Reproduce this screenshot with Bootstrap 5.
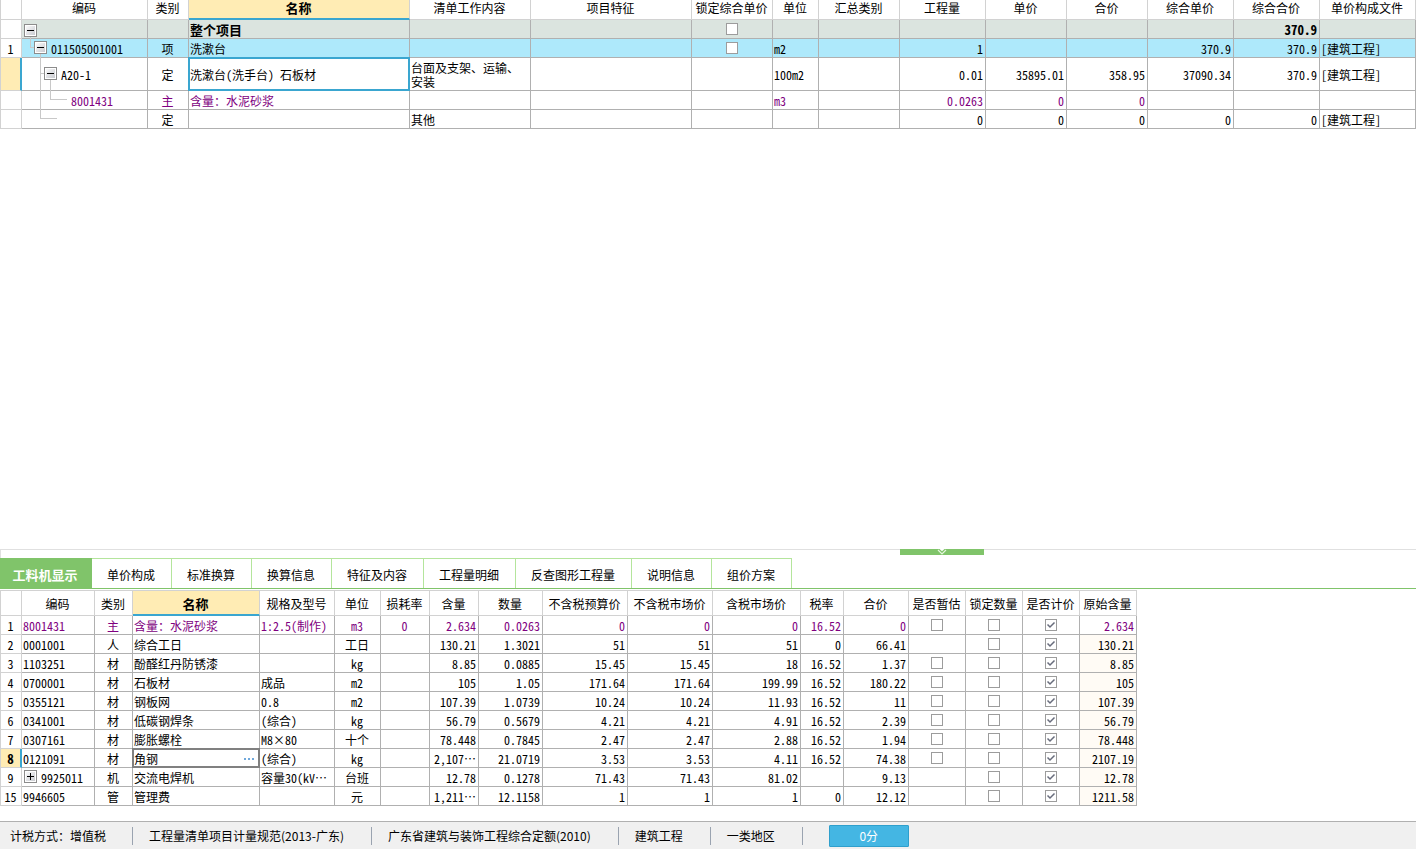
<!DOCTYPE html>
<html lang="zh-CN">
<head>
<meta charset="utf-8">
<meta name="viewport" content="width=device-width, initial-scale=1">
<title>工程量清单计价</title>
<link href="https://cdn.jsdelivr.net/npm/bootstrap@5.3.0/dist/css/bootstrap.min.css" rel="stylesheet">
<style>
  :root { --line: #b0b0b0; --line-soft: #d2d2d2; --accent: #3aa6d0; --pick: #ffecb4; --leaf: #80c46a; --leaf-soft: #b4e59c; }
  body { font-family: "Noto Sans CJK SC", sans-serif; font-size: 12px; line-height: 18px; color: #000; background: #fff; }
  .half { font-feature-settings: "hwid" 1; }

  /* grids */
  .sheet { table-layout: fixed; border-collapse: separate; border-spacing: 0; }
  .sheet th, .sheet td { padding: 2px 2px 0 1px; height: 19px; line-height: 16px; border: 0 solid var(--line); border-width: 0 1px 1px 0; position: relative; white-space: nowrap; vertical-align: middle; }
  .sheet thead th { border-color: var(--line-soft); font-weight: 400; text-align: center; padding: 0 1px 0 0; }
  .sheet thead .picked { background: var(--pick); font-weight: 700; font-size: 13px; border-bottom: 2px solid var(--accent); }
  .sheet tr > :first-child { border-left: 1px solid var(--line-soft); border-right-color: var(--line-soft); border-bottom-color: var(--line-soft); text-align: center; font-weight: 400; padding: 2px 1px 0 0; }
  .sheet tbody .marked > :first-child { background: var(--pick); border-right: 2px solid var(--accent); font-weight: 700; font-size: 13px; padding-right: 0; }
  .sheet .n { text-align: right; }
  .sheet .c { text-align: center; }
  .sheet .main-res > td { color: #800080; }
  .sheet .total > td { background: #dbe4df; font-weight: 700; font-size: 13px; }
  .sheet .current > td { background: #aee9fb; }
  .focus-cell::after { content: ""; position: absolute; inset: -1px; border: 2px solid var(--accent); pointer-events: none; }
  .focus-cell.gray::after { border-color: #808080; }

  .bill { width: 100%; }
  .bill thead th { height: 20px; line-height: 15px; padding-bottom: 4px; }
  .bill thead .picked { padding-bottom: 3px; }
  .bill .tall > * { height: 33px; line-height: 14px; }
  .bill .wraps { white-space: normal; }
  .w22 { width: 22px } .w38 { width: 38px } .w41 { width: 41px } .w43 { width: 43px } .w46 { width: 46px } .w49 { width: 49px }
  .w57 { width: 57px } .w64 { width: 64px } .w65 { width: 65px } .w73 { width: 73px } .w75 { width: 75px } .w81 { width: 81px }
  .w85 { width: 85px } .w86 { width: 86px } .w88 { width: 88px } .w96 { width: 96px } .w121 { width: 121px } .w126 { width: 126px }
  .w127 { width: 127px } .w161 { width: 161px }

  .detail { width: 1137px; }
  .detail thead th { height: 26px; border-top-width: 1px; padding-top: 2px; }
  .detail .orig { background: #fffbf5; }

  /* tree column */
  .sheet .tree { padding-right: 0; }
  .tree > div { line-height: 16px; }
  .lv0 { padding-left: 1px; } .lv1 { padding-left: 11px; } .lv2 { padding-left: 21px; } .lv3 { padding-left: 48px; }
  .branch { position: absolute; left: 0; top: 0; z-index: 1; overflow: visible; pointer-events: none; }
  .branch path { fill: none; stroke: #c8c8c8; shape-rendering: crispEdges; }
  .knob { width: 13px; height: 13px; padding: 0; border: 1px solid #8c8c8c; background: linear-gradient(135deg, #fff, #c4c6cc); box-shadow: inset 0 0 0 1px #fff; position: relative; z-index: 2; }
  .knob svg { display: block; }

  .sheet td.pick { padding: 0 1px 0 0; }
  .tick { appearance: none; display: block; width: 12px; height: 12px; margin: 0 auto; border: 1px solid #9c9c9c; background: #fff center / 10px 10px no-repeat; }
  .tick:checked { background-image: url("data:image/svg+xml,%3Csvg xmlns='http://www.w3.org/2000/svg' viewBox='0 0 10 10'%3E%3Cpath d='M1.5 4.5 4 7 8.5 2.5' fill='none' stroke='%23686c7c' stroke-width='1.5'/%3E%3C/svg%3E"); }
  .more { border: 0; padding: 0; background: none; width: 11px; height: 16px; margin-right: 2px; }
  .more svg { display: block; }

  /* lower panel */
  .splitter { height: 9px; border-top: 1px solid #e0e0e0; border-left: 1px solid #e0e0e0; padding-right: 30.5%; }
  .handle { width: 84px; height: 6px; margin-top: -1px; padding: 0; border: 0; background: var(--leaf); }
  .handle svg { display: block; margin: 0 auto; }
  .panel-tabs { border-bottom: 1px solid var(--leaf); margin-bottom: 1px; }
  .panel-tabs .nav-link { height: 30px; padding: 3px 16px 1px 15px; border: 0 solid var(--leaf-soft); border-width: 1px 1px 0 0; border-radius: 0; margin: 0; background: #fff; color: #000; }
  .panel-tabs .nav-link.active { width: 92px; padding: 3px 1px 1px 0; background: var(--leaf); border-color: var(--leaf); color: #fff; font-weight: 700; font-size: 13px; }

  .statusbar { height: 28px; margin-top: 15px; background: #f0f0f0; border-top: 1px solid var(--line); }
  .statusbar .seg { padding: 0 27px 0 16px; border-right: 1px solid #9aa3b0; white-space: nowrap; }
  .statusbar .seg:first-child { padding: 0 26px 0 10px; }
  .score { width: 80px; height: 22px; margin-left: 26px; padding: 0; border: 1px solid #2f9fcc; border-radius: 1px; background: #44b6e3; color: #fff; font-size: 12px; line-height: 20px; }
  .score:hover { background: #3aa6d0; color: #fff; }
</style>
</head>
<body>
<div class="d-flex flex-column min-vh-100">
<main class="flex-grow-1">
<table class="sheet bill half">
<colgroup><col class="w22"><col class="w126"><col class="w41"><col><col class="w121"><col class="w161"><col class="w81"><col class="w46"><col class="w81"><col class="w86"><col class="w81"><col class="w81"><col class="w86"><col class="w86"><col class="w96"></colgroup>
<thead><tr><th></th><th>编码</th><th>类别</th><th class="picked">名称</th><th>清单工作内容</th><th>项目特征</th><th>锁定综合单价</th><th>单位</th><th>汇总类别</th><th>工程量</th><th>单价</th><th>合价</th><th>综合单价</th><th>综合合价</th><th>单价构成文件</th></tr></thead>
<tbody>
<tr class="total"><th></th>
<td class="tree"><svg class="branch" width="1" height="1" aria-hidden="true"><path d="M8.500 15V27.500H12"/></svg><div class="lv0 d-flex align-items-start"><button class="knob" type="button" aria-label="折叠"><svg width="11" height="11"><path d="M2 5.500H9" stroke="#000"/></svg></button></div></td>
<td></td><td>整个项目</td><td></td><td></td><td class="pick"><input class="tick" type="checkbox" aria-label="锁定综合单价"></td><td></td><td></td><td></td><td></td><td></td><td></td><td class="n">370.9</td><td></td></tr>
<tr class="current"><th>1</th>
<td class="tree"><svg class="branch" width="1" height="1" aria-hidden="true"><path d="M18.500 15V79.500H35M18.500 34.500H22"/></svg><div class="lv1 d-flex align-items-start"><button class="knob me-1" type="button" aria-label="折叠"><svg width="11" height="11"><path d="M2 5.500H9" stroke="#000"/></svg></button>011505001001</div></td>
<td class="c">项</td><td>洗漱台</td><td></td><td></td><td class="pick"><input class="tick" type="checkbox" aria-label="锁定综合单价"></td><td>m2</td><td></td><td class="n">1</td><td></td><td></td><td class="n">370.9</td><td class="n">370.9</td><td>[建筑工程]</td></tr>
<tr class="tall marked"><th></th>
<td class="tree"><svg class="branch" width="1" height="1" aria-hidden="true"><path d="M28.500 22V41.500H45"/></svg><div class="lv2 d-flex align-items-start"><button class="knob me-1" type="button" aria-label="折叠"><svg width="11" height="11"><path d="M2 5.500H9" stroke="#000"/></svg></button>A20-1</div></td>
<td class="c">定</td><td class="focus-cell">洗漱台(洗手台) 石板材</td><td class="wraps">台面及支架、运输、安装</td><td></td><td></td><td>100m2</td><td></td><td class="n">0.01</td><td class="n">35895.01</td><td class="n">358.95</td><td class="n">37090.34</td><td class="n">370.9</td><td>[建筑工程]</td></tr>
<tr class="main-res"><th></th><td class="tree"><div class="lv3">8001431</div></td><td class="c">主</td><td>含量：水泥砂浆</td><td></td><td></td><td></td><td>m3</td><td></td><td class="n">0.0263</td><td class="n">0</td><td class="n">0</td><td></td><td></td><td></td></tr>
<tr><th></th><td></td><td class="c">定</td><td></td><td>其他</td><td></td><td></td><td></td><td></td><td class="n">0</td><td class="n">0</td><td class="n">0</td><td class="n">0</td><td class="n">0</td><td>[建筑工程]</td></tr>
</tbody>
</table>
</main>

<section>
<div class="splitter d-flex justify-content-end align-items-start">
<button class="handle" type="button" aria-label="收起面板"><svg width="10" height="6" viewBox="0 0 10 6"><path d="M2.500 0H7.500L5 2.200Z" fill="#fff"/><path d="M1 1 5 5 9 1" fill="none" stroke="#e4f5dd" stroke-width="1.200"/></svg></button>
</div>
<ul class="nav panel-tabs" role="tablist">
<li class="nav-item"><button class="nav-link active" type="button" role="tab" aria-selected="true">工料机显示</button></li>
<li class="nav-item"><button class="nav-link" type="button" role="tab">单价构成</button></li>
<li class="nav-item"><button class="nav-link" type="button" role="tab">标准换算</button></li>
<li class="nav-item"><button class="nav-link" type="button" role="tab">换算信息</button></li>
<li class="nav-item"><button class="nav-link" type="button" role="tab">特征及内容</button></li>
<li class="nav-item"><button class="nav-link" type="button" role="tab">工程量明细</button></li>
<li class="nav-item"><button class="nav-link" type="button" role="tab">反查图形工程量</button></li>
<li class="nav-item"><button class="nav-link" type="button" role="tab">说明信息</button></li>
<li class="nav-item"><button class="nav-link" type="button" role="tab">组价方案</button></li>
</ul>
<table class="sheet detail half">
<colgroup><col class="w22"><col class="w73"><col class="w38"><col class="w127"><col class="w75"><col class="w46"><col class="w49"><col class="w49"><col class="w64"><col class="w85"><col class="w85"><col class="w88"><col class="w43"><col class="w65"><col class="w57"><col class="w57"><col class="w57"><col class="w57"></colgroup>
<thead><tr><th></th><th>编码</th><th>类别</th><th class="picked">名称</th><th>规格及型号</th><th>单位</th><th>损耗率</th><th>含量</th><th>数量</th><th>不含税预算价</th><th>不含税市场价</th><th>含税市场价</th><th>税率</th><th>合价</th><th>是否暂估</th><th>锁定数量</th><th>是否计价</th><th>原始含量</th></tr></thead>
<tbody>
<tr class="main-res"><th>1</th><td>8001431</td><td class="c">主</td><td>含量：水泥砂浆</td><td>1:2.5(制作)</td><td class="c">m3</td><td class="c">0</td><td class="n">2.634</td><td class="n">0.0263</td><td class="n">0</td><td class="n">0</td><td class="n">0</td><td class="n">16.52</td><td class="n">0</td><td class="pick"><input class="tick" type="checkbox" aria-label="是否暂估"></td><td class="pick"><input class="tick" type="checkbox" aria-label="锁定数量"></td><td class="pick"><input class="tick" type="checkbox" aria-label="是否计价" checked></td><td class="n">2.634</td></tr>
<tr><th>2</th><td>0001001</td><td class="c">人</td><td>综合工日</td><td></td><td class="c">工日</td><td></td><td class="n">130.21</td><td class="n">1.3021</td><td class="n">51</td><td class="n">51</td><td class="n">51</td><td class="n">0</td><td class="n">66.41</td><td></td><td class="pick"><input class="tick" type="checkbox" aria-label="锁定数量"></td><td class="pick"><input class="tick" type="checkbox" aria-label="是否计价" checked></td><td class="n orig">130.21</td></tr>
<tr><th>3</th><td>1103251</td><td class="c">材</td><td>酚醛红丹防锈漆</td><td></td><td class="c">kg</td><td></td><td class="n">8.85</td><td class="n">0.0885</td><td class="n">15.45</td><td class="n">15.45</td><td class="n">18</td><td class="n">16.52</td><td class="n">1.37</td><td class="pick"><input class="tick" type="checkbox" aria-label="是否暂估"></td><td class="pick"><input class="tick" type="checkbox" aria-label="锁定数量"></td><td class="pick"><input class="tick" type="checkbox" aria-label="是否计价" checked></td><td class="n orig">8.85</td></tr>
<tr><th>4</th><td>0700001</td><td class="c">材</td><td>石板材</td><td>成品</td><td class="c">m2</td><td></td><td class="n">105</td><td class="n">1.05</td><td class="n">171.64</td><td class="n">171.64</td><td class="n">199.99</td><td class="n">16.52</td><td class="n">180.22</td><td class="pick"><input class="tick" type="checkbox" aria-label="是否暂估"></td><td class="pick"><input class="tick" type="checkbox" aria-label="锁定数量"></td><td class="pick"><input class="tick" type="checkbox" aria-label="是否计价" checked></td><td class="n orig">105</td></tr>
<tr><th>5</th><td>0355121</td><td class="c">材</td><td>钢板网</td><td>0.8</td><td class="c">m2</td><td></td><td class="n">107.39</td><td class="n">1.0739</td><td class="n">10.24</td><td class="n">10.24</td><td class="n">11.93</td><td class="n">16.52</td><td class="n">11</td><td class="pick"><input class="tick" type="checkbox" aria-label="是否暂估"></td><td class="pick"><input class="tick" type="checkbox" aria-label="锁定数量"></td><td class="pick"><input class="tick" type="checkbox" aria-label="是否计价" checked></td><td class="n orig">107.39</td></tr>
<tr><th>6</th><td>0341001</td><td class="c">材</td><td>低碳钢焊条</td><td>(综合)</td><td class="c">kg</td><td></td><td class="n">56.79</td><td class="n">0.5679</td><td class="n">4.21</td><td class="n">4.21</td><td class="n">4.91</td><td class="n">16.52</td><td class="n">2.39</td><td class="pick"><input class="tick" type="checkbox" aria-label="是否暂估"></td><td class="pick"><input class="tick" type="checkbox" aria-label="锁定数量"></td><td class="pick"><input class="tick" type="checkbox" aria-label="是否计价" checked></td><td class="n orig">56.79</td></tr>
<tr><th>7</th><td>0307161</td><td class="c">材</td><td>膨胀螺栓</td><td>M8×80</td><td class="c">十个</td><td></td><td class="n">78.448</td><td class="n">0.7845</td><td class="n">2.47</td><td class="n">2.47</td><td class="n">2.88</td><td class="n">16.52</td><td class="n">1.94</td><td class="pick"><input class="tick" type="checkbox" aria-label="是否暂估"></td><td class="pick"><input class="tick" type="checkbox" aria-label="锁定数量"></td><td class="pick"><input class="tick" type="checkbox" aria-label="是否计价" checked></td><td class="n orig">78.448</td></tr>
<tr class="marked"><th>8</th><td>0121091</td><td class="c">材</td><td class="focus-cell gray"><div class="d-flex justify-content-between">角钢<button class="more" type="button" aria-label="更多"><svg width="11" height="16"><path d="M0 7h2v2H0zM4 7h2v2H4zM8 7h2v2H8z" fill="#6fa8dc"/></svg></button></div></td><td>(综合)</td><td class="c">kg</td><td></td><td class="n">2,107…</td><td class="n">21.0719</td><td class="n">3.53</td><td class="n">3.53</td><td class="n">4.11</td><td class="n">16.52</td><td class="n">74.38</td><td class="pick"><input class="tick" type="checkbox" aria-label="是否暂估"></td><td class="pick"><input class="tick" type="checkbox" aria-label="锁定数量"></td><td class="pick"><input class="tick" type="checkbox" aria-label="是否计价" checked></td><td class="n orig">2107.19</td></tr>
<tr><th>9</th><td class="tree"><div class="lv0 d-flex align-items-start"><button class="knob me-1" type="button" aria-label="展开"><svg width="11" height="11"><path d="M2 5.500H9M5.500 2V9" stroke="#000"/></svg></button>9925011</div></td><td class="c">机</td><td>交流电焊机</td><td>容量30(kV…</td><td class="c">台班</td><td></td><td class="n">12.78</td><td class="n">0.1278</td><td class="n">71.43</td><td class="n">71.43</td><td class="n">81.02</td><td></td><td class="n">9.13</td><td></td><td class="pick"><input class="tick" type="checkbox" aria-label="锁定数量"></td><td class="pick"><input class="tick" type="checkbox" aria-label="是否计价" checked></td><td class="n orig">12.78</td></tr>
<tr><th>15</th><td>9946605</td><td class="c">管</td><td>管理费</td><td></td><td class="c">元</td><td></td><td class="n">1,211…</td><td class="n">12.1158</td><td class="n">1</td><td class="n">1</td><td class="n">1</td><td class="n">0</td><td class="n">12.12</td><td></td><td class="pick"><input class="tick" type="checkbox" aria-label="锁定数量"></td><td class="pick"><input class="tick" type="checkbox" aria-label="是否计价" checked></td><td class="n orig">1211.58</td></tr>
</tbody>
</table>
</section>

<footer class="statusbar d-flex align-items-center">
<div class="seg">计税方式：增值税</div>
<div class="seg">工程量清单项目计量规范(2013-广东)</div>
<div class="seg">广东省建筑与装饰工程综合定额(2010)</div>
<div class="seg">建筑工程</div>
<div class="seg">一类地区</div>
<button class="btn score" type="button">0分</button>
</footer>
</div>
<script src="https://cdn.jsdelivr.net/npm/bootstrap@5.3.0/dist/js/bootstrap.bundle.min.js"></script>
</body>
</html>
